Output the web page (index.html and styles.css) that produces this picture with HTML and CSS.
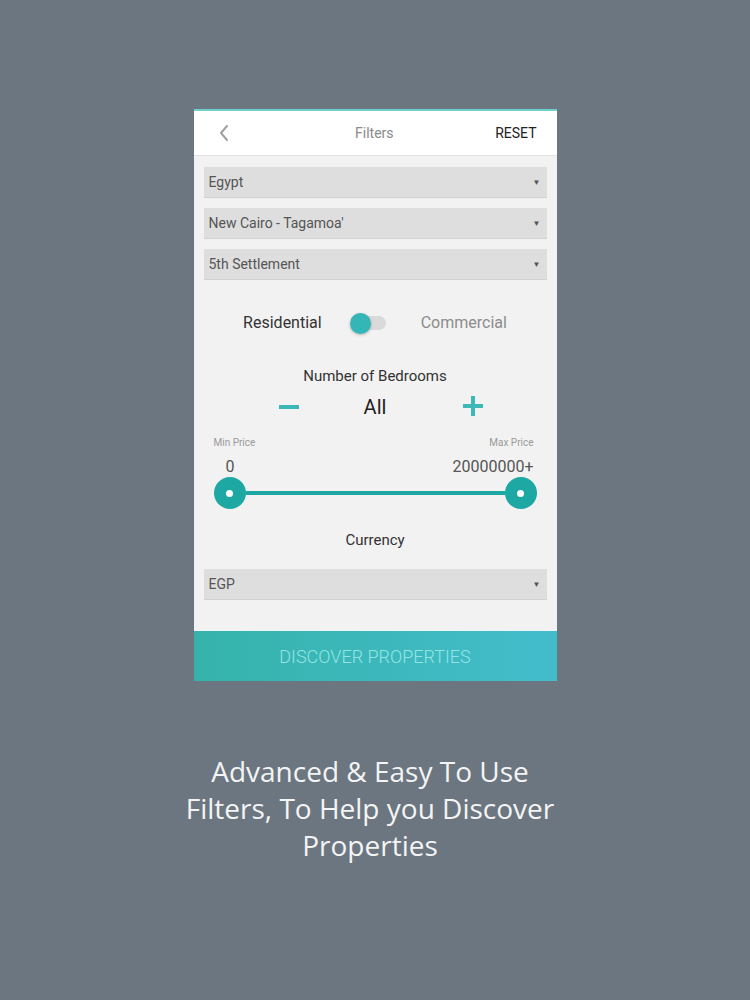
FILE: index.html
```html
<!DOCTYPE html>
<html>

<head>
  <meta charset="UTF-8" />
  <title>Filters</title>
  <link rel="stylesheet" href="styles.css">
</head>

<body>
  <div class="page">
    <div class="phone">
      <div class="topbar">
        <svg class="back" viewBox="0 0 12 20" fill="none" stroke="currentColor" stroke-width="2"
          stroke-linecap="round" stroke-linejoin="round">
          <polyline points="9 3 3 10 9 17"></polyline>
        </svg>
        <span class="title">Filters</span>
        <span class="reset">RESET</span>
      </div>

      <div class="content">
        <div class="select"><span>Egypt</span><span class="caret">&#9660;</span></div>
        <div class="select"><span>New Cairo - Tagamoa'</span><span class="caret">&#9660;</span></div>
        <div class="select"><span>5th Settlement</span><span class="caret">&#9660;</span></div>

        <div class="type-row">
          <span class="type active">Residential</span>
          <span class="switch"><span class="knob"></span></span>
          <span class="type">Commercial</span>
        </div>

        <div class="label">Number of Bedrooms</div>
        <div class="stepper">
          <span class="minus"></span>
          <span class="count">All</span>
          <span class="plus"></span>
        </div>

        <div class="price-labels">
          <span>Min Price</span>
          <span>Max Price</span>
        </div>
        <div class="price-values">
          <span class="min-value">0</span>
          <span>20000000+</span>
        </div>
        <div class="slider">
          <span class="handle"></span>
          <span class="track"></span>
          <span class="handle"></span>
        </div>

        <div class="label currency">Currency</div>
        <div class="select"><span>EGP</span><span class="caret">&#9660;</span></div>
      </div>

      <button class="discover">DISCOVER PROPERTIES</button>
    </div>

    <p class="caption">Advanced &amp; Easy To Use<br>Filters, To Help you Discover<br>Properties</p>
  </div>
</body>

</html>
```

FILE: styles.css
```css
body {
  margin: 0;
  background-color: #6b7680;
  font-family: Roboto, "Liberation Sans", sans-serif;
}

.page {
  display: flex;
  flex-direction: column;
  align-items: center;
  padding-top: 109px;
  height: 891px;
}

.phone {
  width: 363px;
  background-color: #f2f2f2;
  border-top: 2px solid #6fd0cc;
  display: flex;
  flex-direction: column;
}

/* header */
.topbar {
  height: 44px;
  background-color: #fff;
  border-bottom: 1px solid #e2e2e2;
  display: flex;
  align-items: center;
  padding: 0 20px 0 24px;
}

.back {
  width: 12px;
  height: 20px;
  color: #a0a0a0;
}

.title {
  flex: 1;
  text-align: center;
  font-size: 14px;
  color: #8a8a8a;
  padding-left: 24px;
}

.reset {
  font-size: 14px;
  color: #222;
}

.content {
  padding: 11px 10px 31px;
  display: flex;
  flex-direction: column;
}

/* dropdowns */
.select {
  height: 31px;
  background-color: #dedede;
  border-bottom: 1px solid #d2d2d2;
  box-sizing: border-box;
  display: flex;
  align-items: center;
  justify-content: space-between;
  padding: 0 6px 0 5px;
  font-size: 14px;
  color: #555;
  margin-bottom: 10px;
}

.caret {
  font-size: 8px;
  color: #555;
}

/* residential / commercial */
.type-row {
  height: 52px;
  margin-top: 6px;
  display: flex;
  align-items: center;
  justify-content: center;
  font-size: 16px;
}

.type {
  color: #8c8c8c;
}

.type.active {
  color: #333;
}

.switch {
  width: 30px;
  height: 14px;
  border-radius: 7px;
  background-color: #dadada;
  margin: 2px 35px 0 34px;
  display: flex;
  align-items: center;
}

.knob {
  width: 21px;
  height: 21px;
  border-radius: 50%;
  background-color: #35b6b6;
  margin-left: -6px;
  box-shadow: 0 1px 3px rgba(0, 0, 0, 0.25);
}

.label {
  text-align: center;
  font-size: 15px;
  color: #333;
  line-height: 20px;
  margin-top: 18px;
}

/* bedrooms */
.stepper {
  height: 30px;
  margin-top: 6px;
  padding-left: 12px;
  display: flex;
  align-items: center;
  justify-content: center;
}

.minus {
  width: 20px;
  height: 4px;
  background-color: #3cb9b7;
  margin-right: 65px;
}

.count {
  font-size: 20px;
  color: #222;
}

.plus {
  width: 20px;
  height: 20px;
  margin-left: 77px;
  margin-bottom: 2px;
  background:
    linear-gradient(#3cb9b7, #3cb9b7) center / 20px 4px no-repeat,
    linear-gradient(#3cb9b7, #3cb9b7) center / 4px 20px no-repeat;
}

/* price range */
.price-labels {
  display: flex;
  justify-content: space-between;
  padding: 0 13px 0 10px;
  margin-top: 15px;
  font-size: 10px;
  color: #9a9a9a;
  line-height: 12px;
}

.price-values {
  display: flex;
  justify-content: space-between;
  padding: 0 13px 0 22px;
  margin-top: 8px;
  font-size: 16px;
  color: #555;
  line-height: 20px;
}

.slider {
  display: flex;
  align-items: center;
  padding: 0 10px;
  height: 34px;
  margin-top: -1px;
}

.handle {
  width: 32px;
  height: 32px;
  border-radius: 50%;
  background-color: #1ea8a4;
  display: flex;
  align-items: center;
  justify-content: center;
}

.handle::after {
  content: "";
  width: 7px;
  height: 7px;
  border-radius: 50%;
  background-color: #fff;
}

.track {
  flex: 1;
  height: 4px;
  background-color: #1ea8a4;
}

.label.currency {
  margin-top: 20px;
  margin-bottom: 19px;
}

.content .select:last-child {
  margin-bottom: 0;
}

/* bottom action */
.discover {
  height: 50px;
  border: none;
  background: linear-gradient(to right, #35b3ab, #43bdcc);
  color: #95e4e4;
  font-family: Roboto, "Liberation Sans", sans-serif;
  font-weight: 300;
  font-size: 18px;
  padding: 0;
}

.caption {
  margin: 72px 10px 0 0;
  font-family: "Open Sans", sans-serif;
  font-size: 28px;
  line-height: 37px;
  color: #f4f4f4;
  text-align: center;
}
```
